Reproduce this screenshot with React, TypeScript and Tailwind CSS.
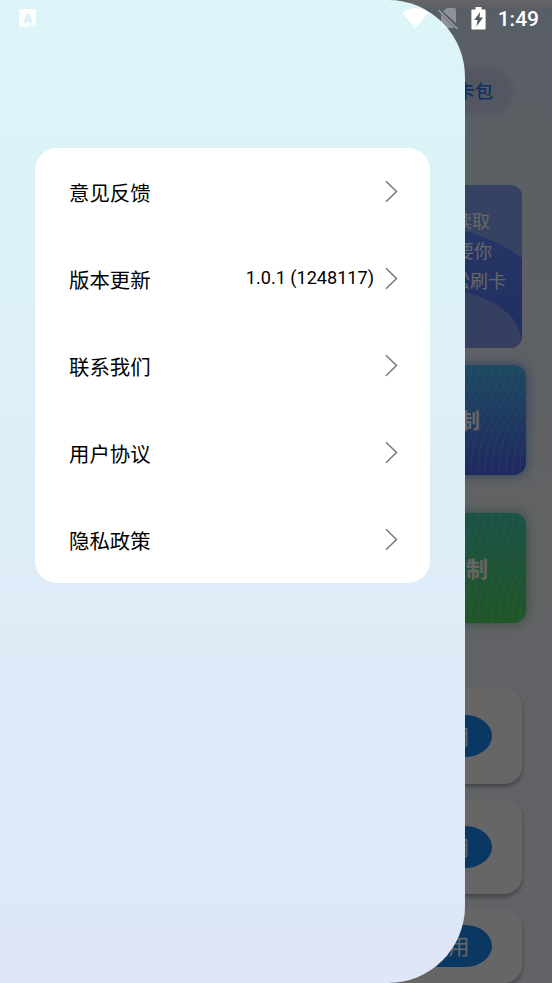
import React from 'react';
import clsx from 'clsx';

const MENU = [
  { label: '意见反馈' },
  { label: '版本更新', value: '1.0.1 (1248117)' },
  { label: '联系我们' },
  { label: '用户协议' },
  { label: '隐私政策' },
];

const CARDS = ['h-24', 'h-[95px]', 'h-[74px]'];

const WAVES = Array.from({ length: 20 }, (_, i) => i * 7 - 42);

const Chevron: React.FC = () => (
  <svg className="w-[14px] h-6" viewBox="0 0 14 24" fill="none" stroke="#777777" strokeWidth="1.5">
    <path d="M1 1.3 L11.5 11.5 L1 21.7" />
  </svg>
);

const Waves: React.FC = () => (
  <svg className="absolute inset-y-0 right-0 w-[90px] h-full" viewBox="0 0 90 110" fill="none" stroke="#fff" strokeOpacity="0.22" strokeWidth="0.8">
    {WAVES.map((x) => (
      <path key={x} d={`M${x + 36} -4 C${x + 36} 48 ${x - 2} 46 ${x} 114`} />
    ))}
  </svg>
);

const StatusBar: React.FC = () => (
  <div className="absolute inset-x-0 top-0 h-9 flex items-center">
    <div className="relative ml-[19px] w-[17px] h-[18px] rounded-xs bg-white/90 flex items-center justify-center">
      <span className="text-[13px] leading-none font-bold text-[#cfeff5]">A</span>
      <span className="absolute right-[2px] bottom-[1px] w-[6px] h-px bg-[#d5f1f5]" />
    </div>
    <svg className="ml-auto w-[28px] h-[22px]" viewBox="0 0 28 22" fill="#fff">
      <path d="M.2 5.8 C8 -.7 19 -.7 26.6 5.8 L13.4 21.5 Z" />
    </svg>
    <svg className="ml-[8px] w-[22px] h-6" viewBox="0 0 22 24">
      <path d="M9 2 H16 Q18 2 18 4 V17 L5 5.5 Z M3 8 L16.5 22 H5 Q3 22 3 20 Z" fill="#fff" fillOpacity=".32" />
      <path d="M.5 4 L19.5 23" stroke="#fff" strokeOpacity=".4" strokeWidth="1.5" />
    </svg>
    <svg className="ml-[11px] w-[15px] h-[23px]" viewBox="0 0 15 23">
      <path d="M4.5 0 H10.5 V2.5 H13.5 Q14.6 2.5 14.6 3.6 V21.4 Q14.6 22.5 13.5 22.5 H1.5 Q.4 22.5 .4 21.4 V3.6 Q.4 2.5 1.5 2.5 H4.5 Z" fill="#fff" />
      <path d="M9.2 5 L3.2 13 H6.6 L5.4 19.5 L12 10.4 H8.4 Z" fill="#505862" />
    </svg>
    <span className="ml-[12px] mr-[13px] pt-[2px] text-[21px] font-medium text-white leading-9">1:49</span>
  </div>
);

const HomePage: React.FC = () => (
  <div className="h-full flex flex-col items-end bg-linear-to-b from-[#dcecfc] via-[#f0f4fa] to-[#f5f7ff] text-white">
    <div className="w-full h-2 shrink-0 bg-linear-to-b from-[#fffaff] to-[#e6f0fa]" />
    <div className="mt-[61px] mr-10 h-[45px] w-[120px] rounded-full bg-[#d2d7f4] border border-[#dadff5] shadow-[0_0_5px_#c4cdf2] flex items-center justify-end pr-[18px] text-[18px] font-medium text-[#1f7cf5] shrink-0">
      我的卡包
    </div>

    <div className="relative mt-[71px] mr-[30px] w-[490px] h-[163px] rounded-xl overflow-hidden bg-linear-to-b from-[#668cff] to-[#5075f5] shrink-0">
      <svg className="absolute right-0 top-0 w-[120px] h-[163px]" viewBox="0 0 120 163">
        <path d="M0 0 H120 V73 Q95 54 62 46 Q30 36 0 36 Z" fill="#86a6f5" />
        <path d="M0 100 Q45 100 70 109 Q115 124 119 152 L117 163 H0 Z" fill="#86a0f0" />
      </svg>
      <div className="relative pt-[22px] text-right text-[18px] leading-[30px]">
        <p className="pr-8">轻松读取</p>
        <p className="pr-[30px]">只需要你</p>
        <p className="pr-4">轻松刷卡</p>
      </div>
    </div>

    <div className="relative mt-[17px] mr-[26px] w-[230px] h-[110px] rounded-xl bg-linear-to-b from-[#48b8f5] to-[#4e65ef] shadow-[0_0_12px_#6e9de8] flex items-center justify-end pr-[46px] pt-1 text-[21px] font-bold shrink-0">
      <Waves />
      <span className="relative">读卡复制</span>
    </div>

    <div className="relative mt-[38px] mr-[26px] w-[230px] h-[110px] rounded-xl bg-linear-to-b from-[#48cdb0] to-[#4eda60] shadow-[0_0_12px_#80bf9a] flex items-center justify-end pr-[38px] pt-[3px] text-[22px] font-bold shrink-0">
      <Waves />
      <span className="relative">手动复制</span>
    </div>

    <div className="mt-[65px] mr-[30px] flex flex-col gap-[15px]">
      {CARDS.map((height) => (
        <div
          key={height}
          className={clsx('w-[490px] rounded-[18px] bg-white shadow-[0_3px_4px_#a8abb5] flex items-center justify-end pr-[30px] shrink-0', height)}
        >
          <span className="w-[88px] h-[42px] pt-[4px] pl-px rounded-[27px/21px] bg-[#198cf5] flex items-center justify-center text-[21px]">使用</span>
        </div>
      ))}
    </div>
  </div>
);

export default function App() {
  return (
    <div className="relative w-[552px] h-[983px] overflow-hidden font-[Roboto,'Noto_Sans_CJK_SC',sans-serif]">
      <HomePage />
      {/* Scrim */}
      <div className="absolute inset-0 bg-black/60" />

      {/* Drawer */}
      <aside className="absolute inset-y-0 left-0 w-[465px] rounded-r-[77px] bg-linear-to-b from-[#dcf5f8] to-[#dee6f7] pt-[148px] pl-[35px] pr-[35px]">
        <ul className="rounded-[22px] bg-white text-black">
          {MENU.map((item) => (
            <li key={item.label} className="h-[87px] pl-[34px] pr-[31px] flex items-center">
              <span className="pt-[6px] text-[20.4px]">{item.label}</span>
              {item.value && <span className="ml-auto mr-[11px] text-[18.1px] -mt-[2px]">{item.value}</span>}
              <span className={item.value ? '' : 'ml-auto'}><Chevron /></span>
            </li>
          ))}
        </ul>
      </aside>

      <StatusBar />
    </div>
  );
}
